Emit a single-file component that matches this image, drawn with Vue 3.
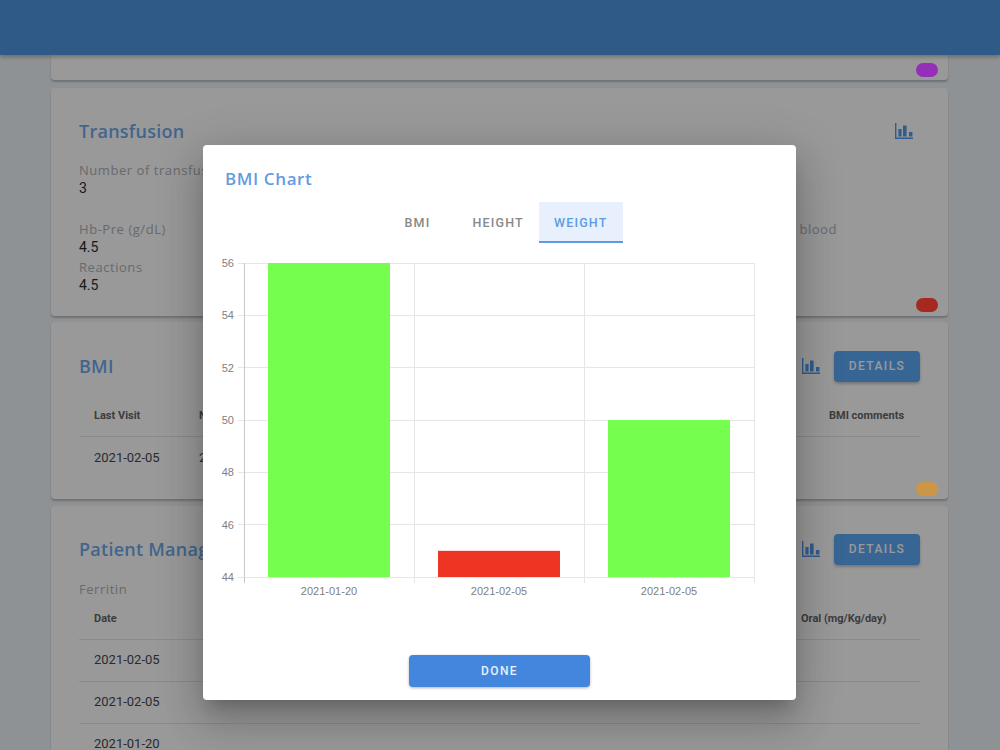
<template>
  <div class="page">
    <header class="topbar"></header>

    <main class="content">
      <section class="card card-stub">
        <span class="pill purple"></span>
      </section>

      <section class="card card-transfusion">
        <div class="card-head">
          <h2 class="card-title">Transfusion</h2>
          <svg class="chart-icon" viewBox="0 0 18 16"><path :d="iconPath" /></svg>
        </div>
        <div class="fields">
          <div class="field field-wide">
            <div class="field-label">Number of transfusions</div>
            <div class="field-value">3</div>
          </div>
          <div class="field-row">
            <div class="field">
              <div class="field-label">Hb-Pre (g/dL)</div>
              <div class="field-value">4.5</div>
            </div>
            <div class="field field-right">
              <div class="field-label">Type of blood</div>
            </div>
          </div>
          <div class="field">
            <div class="field-label">Reactions</div>
            <div class="field-value">4.5</div>
          </div>
        </div>
        <span class="pill red"></span>
      </section>

      <section class="card card-bmi">
        <div class="card-head">
          <h2 class="card-title">BMI</h2>
          <div class="head-actions">
            <svg class="chart-icon" viewBox="0 0 18 16"><path :d="iconPath" /></svg>
            <button class="details-btn">DETAILS</button>
          </div>
        </div>
        <div class="table-row table-head bmi-cols">
          <span>Last Visit</span><span>No.</span><span></span><span>BMI comments</span>
        </div>
        <div class="table-row bmi-cols">
          <span>2021-02-05</span><span>21</span><span></span><span></span>
        </div>
        <span class="pill orange"></span>
      </section>

      <section class="card card-patient">
        <div class="card-head">
          <h2 class="card-title">Patient Management</h2>
          <div class="head-actions">
            <svg class="chart-icon" viewBox="0 0 18 16"><path :d="iconPath" /></svg>
            <button class="details-btn">DETAILS</button>
          </div>
        </div>
        <div class="field-label ferritin">Ferritin</div>
        <div class="table-row table-head patient-cols">
          <span>Date</span><span>Oral (mg/Kg/day)</span>
        </div>
        <div v-for="d in visits" :key="d.id" class="table-row patient-cols visit-row">
          <span>{{ d.date }}</span><span></span>
        </div>
      </section>
    </main>

    <div class="overlay">
      <div class="dialog">
        <h3 class="dialog-title">BMI Chart</h3>
        <div class="tabs">
          <div v-for="t in tabs" :key="t" class="tab" :class="{ active: t === activeTab }">{{ t }}</div>
        </div>

        <svg class="chart" width="593" height="355" viewBox="0 0 593 355">
          <g class="grid">
            <line v-for="t in yTicks" :key="t.label" :x1="35" :x2="551" :y1="t.y" :y2="t.y" />
            <line v-for="x in xTicks" :key="x" :x1="x" :x2="x" y1="21" y2="341" />
          </g>
          <line class="axis" x1="41" x2="41" y1="21" y2="341" />
          <rect v-for="b in bars" :key="b.x" :x="b.x" :y="b.y" width="122" :height="335 - b.y" :fill="b.fill" />
          <text v-for="t in yTicks" :key="'l' + t.label" class="tick" x="31" :y="t.y + 4" text-anchor="end">{{ t.label }}</text>
          <text v-for="b in bars" :key="'d' + b.x" class="tick" :x="b.x + 61" y="353" text-anchor="middle">{{ b.date }}</text>
        </svg>

        <div class="dialog-actions">
          <button class="done-btn">DONE</button>
        </div>
      </div>
    </div>
  </div>
</template>

<script setup>
const activeTab = 'WEIGHT'
const tabs = ['BMI', 'HEIGHT', 'WEIGHT']

const iconPath = 'M0 0h1.4v14.6H18V16H0z M3.4 6h3.2v7.6H3.4z M8 2.6h3.6v11H8z M14 9h3.4v4.6H14z'

const visits = [
  { id: 1, date: '2021-02-05' },
  { id: 2, date: '2021-02-05' },
  { id: 3, date: '2021-01-20' },
]

// y = 44..56 runs from 335 up to 21 in chart coordinates
const yOf = (v) => 335 - ((v - 44) / 12) * 314

const yTicks = [56, 54, 52, 50, 48, 46, 44].map((v) => ({ label: v, y: yOf(v) }))
const xTicks = [41, 211, 381, 551]

const bars = [
  { x: 65, y: yOf(56), fill: '#76fe4e', date: '2021-01-20' },
  { x: 235, y: yOf(45), fill: '#ee3423', date: '2021-02-05' },
  { x: 405, y: yOf(50), fill: '#76fe4e', date: '2021-02-05' },
]
</script>

<style>
html, body {
  margin: 0;
  height: 100%;
  overflow: hidden;
}
</style>

<style scoped>
.page {
  position: relative;
  height: 750px;
  overflow: hidden;
  background: #edf2f6;
  font-family: Roboto, "Liberation Sans", sans-serif;
}
.topbar {
  height: 55px;
  background: #3b8be0;
  box-shadow: 0 2px 4px rgba(0, 0, 0, 0.3);
  position: relative;
  z-index: 1;
}
.content {
  display: flex;
  flex-direction: column;
  gap: 7px;
  margin: 0 52px 0 51px;
}
.card {
  position: relative;
  background: #fff;
  border-radius: 4px;
  box-shadow: 0 2px 2px rgba(0, 0, 0, 0.25);
  padding: 0 28px;
}
.card-stub {
  height: 25px;
  border-radius: 0 0 4px 4px;
  margin-bottom: 1px;
}
.card-transfusion {
  height: 228px;
  padding-top: 28px;
  margin-bottom: -1px;
  box-sizing: border-box;
}
.card-bmi {
  height: 177px;
  padding-top: 29px;
  box-sizing: border-box;
}
.card-patient {
  height: 300px;
  padding-top: 28px;
  box-sizing: border-box;
}
.card-head {
  display: flex;
  align-items: center;
  justify-content: space-between;
  height: 30px;
}
.head-actions {
  display: flex;
  align-items: center;
  gap: 14px;
}
.card-title {
  margin: 0;
  font-family: "Open Sans", sans-serif;
  font-size: 18px;
  font-weight: 600;
  letter-spacing: 0.25px;
  color: #5f9fe8;
}
.chart-icon {
  width: 18px;
  height: 16px;
  fill: #3f8ee6;
}
.card-transfusion .chart-icon {
  margin-right: 7px;
}
.fields {
  margin-top: 15px;
}
.field-row {
  display: flex;
  justify-content: space-between;
  margin-top: 23px;
  margin-right: 83px;
}
.field-label {
  font-family: "Open Sans", sans-serif;
  font-size: 13px;
  font-weight: 500;
  letter-spacing: 0.55px;
  line-height: 18px;
  color: #a4a9ae;
}
.field-value {
  font-size: 14px;
  line-height: 18px;
  color: #111;
}
.field-row + .field {
  margin-top: 2px;
}
.details-btn {
  width: 86px;
  height: 31px;
  border: 0;
  border-radius: 4px;
  background: #4a9ff5;
  color: #fff;
  font-family: Roboto, sans-serif;
  font-size: 12px;
  font-weight: 500;
  letter-spacing: 1.4px;
  box-shadow: 0 2px 3px rgba(0, 0, 0, 0.25);
  padding: 0;
}
.table-row {
  display: grid;
  align-items: center;
  height: 41px;
  border-bottom: 1px solid #e4e4e4;
  font-size: 13px;
  color: #333;
}
.table-row > span {
  padding-left: 15px;
  white-space: nowrap;
}
.table-head {
  font-size: 11px;
  font-weight: 700;
  color: #555;
}
.bmi-cols {
  grid-template-columns: 105px 34px 1fr 106px;
}
.card-bmi .table-head {
  margin-top: 14px;
}
.card-bmi .table-row:last-of-type {
  border-bottom: 0;
}
.patient-cols {
  grid-template-columns: 1fr 134px;
}
.visit-row {
  height: 38px;
  padding-bottom: 3px;
}
.ferritin {
  margin-top: 16px;
}
.card-patient .table-head {
  height: 42px;
  margin-top: -1px;
}
.pill {
  position: absolute;
  right: 10px;
  bottom: 4px;
  width: 22px;
  height: 14px;
  border-radius: 7px;
  z-index: 3;
}
.purple { background: #942fb8; bottom: 3px; }
.red { background: #a5291e; }
.orange { background: #cd9646; bottom: 3px; }

.overlay {
  position: absolute;
  inset: 0;
  z-index: 2;
  display: flex;
  justify-content: center;
  align-items: flex-start;
  padding-top: 145px;
  box-sizing: border-box;
  background: rgba(33, 33, 33, 0.46);
}
.dialog {
  width: 593px;
  height: 555px;
  margin-right: 1px;
  background: #fff;
  border-radius: 4px;
  box-shadow: 0 11px 15px -7px rgba(0, 0, 0, 0.2), 0 24px 38px 3px rgba(0, 0, 0, 0.14), 0 9px 46px 8px rgba(0, 0, 0, 0.12);
}
.dialog-title {
  margin: 0;
  padding: 22px 0 0 22px;
  height: 35px;
  font-family: "Open Sans", sans-serif;
  font-size: 17px;
  font-weight: 600;
  line-height: 24px;
  letter-spacing: 0.6px;
  color: #649ce2;
}
.tabs {
  display: flex;
  justify-content: center;
  margin-left: 1px;
}
.tab {
  min-width: 80px;
  padding: 0 15px;
  height: 41px;
  line-height: 41px;
  box-sizing: border-box;
  text-align: center;
  font-size: 12.5px;
  font-weight: 500;
  letter-spacing: 1.2px;
  color: #888;
}
.tab.active {
  color: #5f9be3;
  background: #e7f0fc;
  border-bottom: 2px solid #5f9be3;
}
.chart {
  display: block;
  margin-top: -1px;
}
.grid line {
  stroke: #e6e6e6;
  stroke-width: 1;
  shape-rendering: crispEdges;
}
.axis {
  stroke: #c8c8c8;
  stroke-width: 1;
  shape-rendering: crispEdges;
}
.tick {
  font-family: "Liberation Sans", sans-serif;
  font-size: 11px;
  fill: #808080;
}
.dialog-actions {
  display: flex;
  justify-content: center;
  margin-top: 58px;
}
.done-btn {
  width: 181px;
  height: 32px;
  border: 0;
  border-radius: 4px;
  background: #4286dd;
  color: #e8f1fc;
  font-family: Roboto, sans-serif;
  font-size: 12px;
  font-weight: 500;
  letter-spacing: 1.4px;
  box-shadow: 0 1px 3px rgba(0, 0, 0, 0.3);
  padding: 0;
}
</style>
